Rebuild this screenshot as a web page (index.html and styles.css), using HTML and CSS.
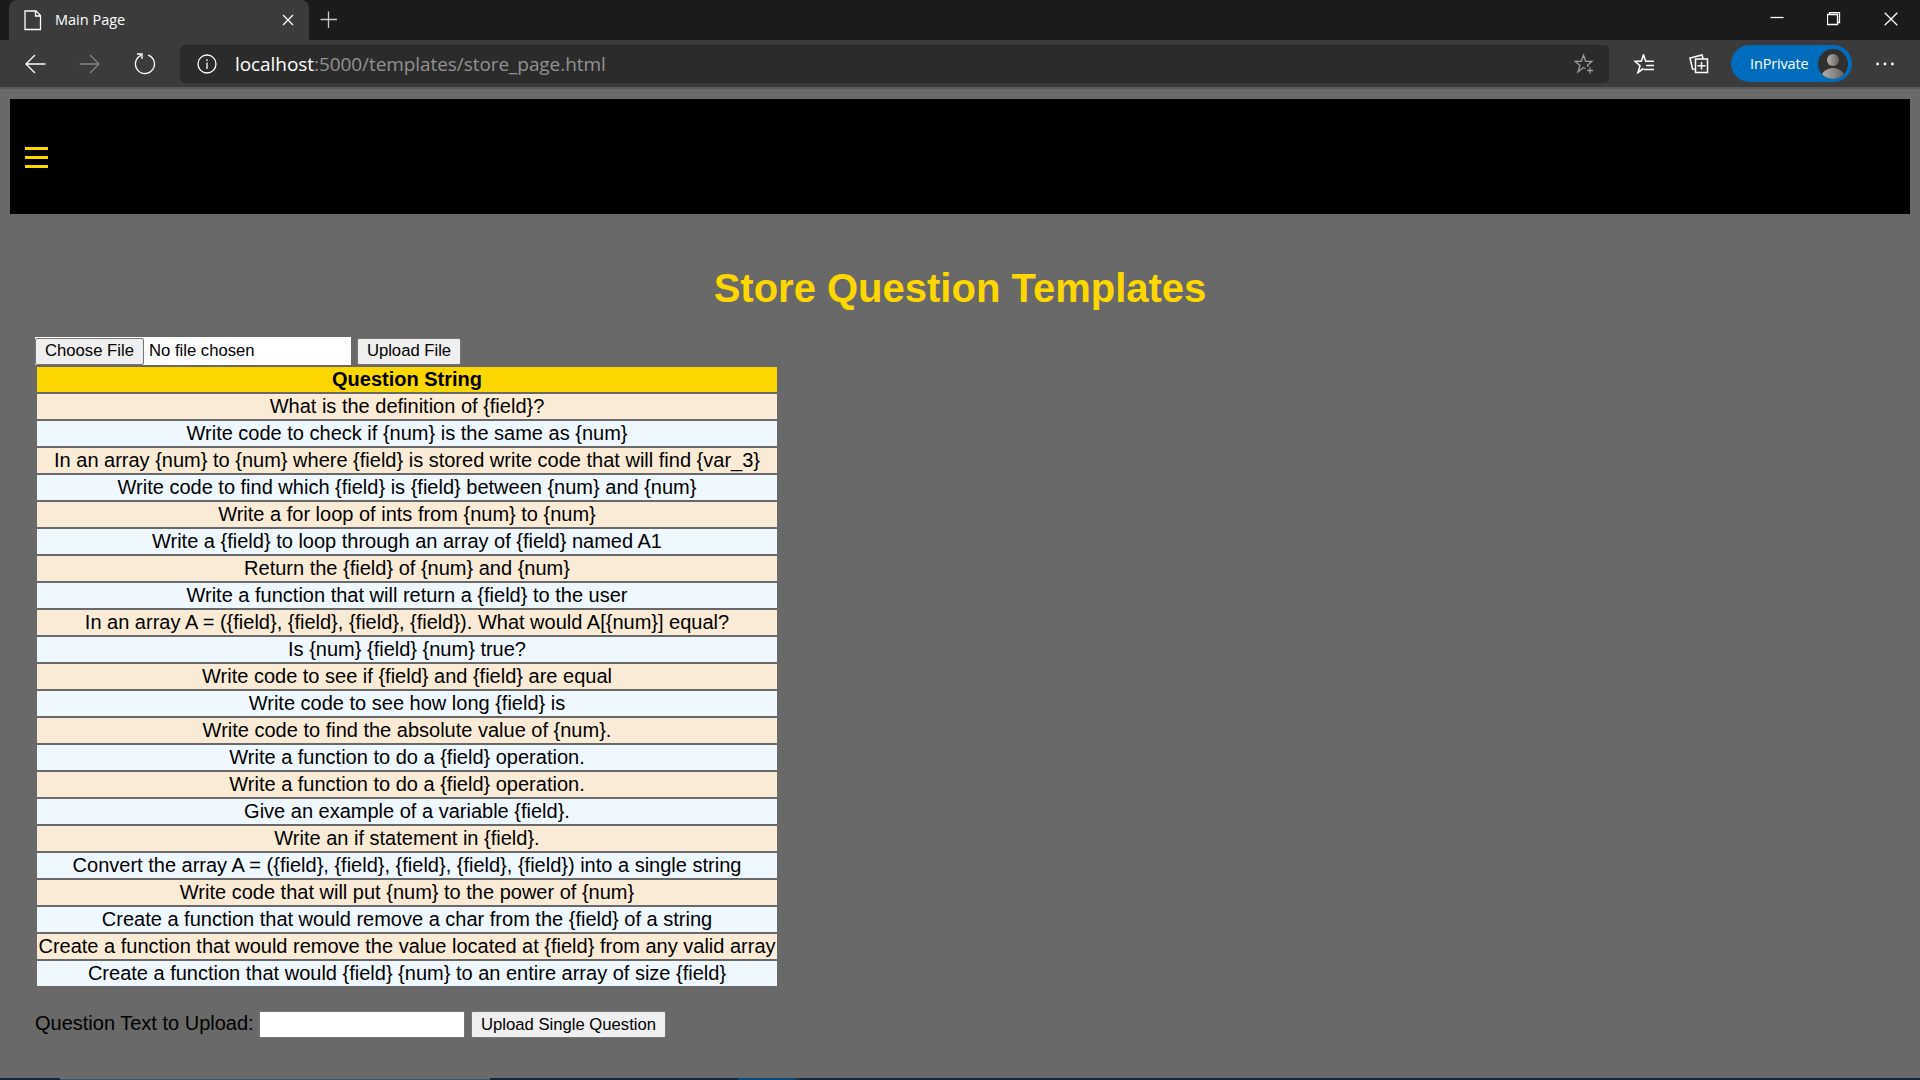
FILE: index.html
```html
<!DOCTYPE html>
<html lang="en">
<head>
<meta charset="utf-8">
<title>Main Page</title>
<link rel="stylesheet" href="styles.css">
</head>
<body>
<div class="tabs">
  <div class="tab">
    <svg class="doc" width="18" height="21" viewBox="0 0 18 21"><path d="M1 1H12L16.5 5.5V19.5H1ZM11.5 1V6H16.5"/></svg>
    <span class="tab-title">Main Page</span>
    <svg class="tab-close" width="12" height="12" viewBox="0 0 12 12"><path d="M1 1L11 11M11 1L1 11"/></svg>
  </div>
  <svg class="plus" width="18" height="18" viewBox="0 0 18 18"><path d="M8.5 0.500V17M0.500 8.500H17"/></svg>
  <div class="window-buttons">
    <svg width="14" height="14" viewBox="0 0 14 14"><path d="M0.500 5.500H13.500"/></svg>
    <svg width="14" height="14" viewBox="0 0 14 14"><path d="M0.500 2.500H10.500V12.500H0.500ZM2.500 2.500V0.500H12.500V10.500H10.500"/></svg>
    <svg width="14" height="14" viewBox="0 0 14 14"><path d="M0.700 0.700L13.300 13.300M13.300 0.700L0.700 13.300"/></svg>
  </div>
</div>
<div class="toolbar">
  <svg class="back" width="21" height="20" viewBox="0 0 21 20"><path d="M10 1L1 10L10 19M1 10H20.500"/></svg>
  <svg class="forward" width="21" height="20" viewBox="0 0 21 20"><path d="M11 1L20 10L11 19M20 10H0.500"/></svg>
  <svg class="reload" width="22" height="23" viewBox="0 0 22 23"><path d="M14.200 3.100A9.500 9.500 0 1 1 7 3.400M3 2H8V7"/></svg>
  <div class="address">
    <svg class="info" width="20" height="20" viewBox="0 0 20 20"><circle cx="10" cy="10" r="9"/><path d="M10 8.500V15M10 5.200V7"/></svg>
    <span class="url"><b>localhost</b>:5000/templates/store_page.html</span>
    <svg class="star" width="21" height="20" viewBox="0 0 21 20"><path d="M11.500 14.700L9.500 13.500L4 18L6 11.500L1 7.300H7.300L9.500 1L11.700 7.300H18L13.500 11.300L14 13M16 13.500V19.500M13 16.500H19"/></svg>
  </div>
  <svg class="favorites" width="21" height="20" viewBox="0 0 21 20"><path d="M9.500 14.500L4 18.500L6 11.700L1 7.300H7.300L9.500 1L11.700 7.300H20M12 11.500H20M10 15.500H20"/></svg>
  <svg class="collections" width="20" height="20" viewBox="0 0 20 20"><path d="M6.500 5H18.500V18.500H6.500ZM12.500 8V15.500M8.500 11.700H16.500M5.500 15.500L3.500 15L1 4L13 1L14 4.500"/></svg>
  <div class="profile">
    <span>InPrivate</span>
    <svg width="30" height="30" viewBox="0 0 30 30">
      <defs><linearGradient id="shade"><stop offset="0" stop-color="#b5b3b0"/><stop offset="1" stop-color="#65615e"/></linearGradient><clipPath id="disc"><circle cx="15" cy="15" r="15"/></clipPath></defs>
      <circle class="disc" cx="15" cy="15" r="15"/>
      <g clip-path="url(#disc)"><circle class="person" cx="15" cy="11" r="6"/><ellipse class="person" cx="15" cy="28" rx="11.500" ry="9"/></g>
    </svg>
  </div>
  <svg class="more" width="18" height="4" viewBox="0 0 18 4"><circle cx="1.600" cy="2" r="1.400"/><circle cx="9" cy="2" r="1.400"/><circle cx="16.400" cy="2" r="1.400"/></svg>
</div>
<main class="page">
  <header class="banner">
    <svg class="menu" width="23" height="21" viewBox="0 0 23 21"><path d="M0 1.500H23M0 10.500H23M0 19.500H23"/></svg>
  </header>
  <h1>Store Question Templates</h1>
  <section class="content">
    <div class="upload">
      <div class="file"><button class="button choose">Choose File</button><span>No file chosen</span></div>
      <button class="button upload-file">Upload File</button>
    </div>
    <table>
      <tr><th>Question String</th></tr>
      <tr><td>What is the definition of {field}?</td></tr>
      <tr><td>Write code to check if {num} is the same as {num}</td></tr>
      <tr><td>In an array {num} to {num} where {field} is stored write code that will find {var_3}</td></tr>
      <tr><td>Write code to find which {field} is {field} between {num} and {num}</td></tr>
      <tr><td>Write a for loop of ints from {num} to {num}</td></tr>
      <tr><td>Write a {field} to loop through an array of {field} named A1</td></tr>
      <tr><td>Return the {field} of {num} and {num}</td></tr>
      <tr><td>Write a function that will return a {field} to the user</td></tr>
      <tr><td>In an array A = ({field}, {field}, {field}, {field}). What would A[{num}] equal?</td></tr>
      <tr><td>Is {num} {field} {num} true?</td></tr>
      <tr><td>Write code to see if {field} and {field} are equal</td></tr>
      <tr><td>Write code to see how long {field} is</td></tr>
      <tr><td>Write code to find the absolute value of {num}.</td></tr>
      <tr><td>Write a function to do a {field} operation.</td></tr>
      <tr><td>Write a function to do a {field} operation.</td></tr>
      <tr><td>Give an example of a variable {field}.</td></tr>
      <tr><td>Write an if statement in {field}.</td></tr>
      <tr><td>Convert the array A = ({field}, {field}, {field}, {field}, {field}) into a single string</td></tr>
      <tr><td>Write code that will put {num} to the power of {num}</td></tr>
      <tr><td>Create a function that would remove a char from the {field} of a string</td></tr>
      <tr><td>Create a function that would remove the value located at {field} from any valid array</td></tr>
      <tr><td>Create a function that would {field} {num} to an entire array of size {field}</td></tr>
    </table>
    <div class="single">
      <label for="question">Question Text to Upload:</label>
      <input id="question" type="text">
      <button class="button upload-single">Upload Single Question</button>
    </div>
  </section>
</main>
<div class="taskbar"><i class="window"></i><i class="active"></i></div>
</body>
</html>
```
FILE: styles.css
```css
* { box-sizing: border-box; }
body {
  margin: 0;
  width: 1920px;
  height: 1080px;
  overflow: hidden;
  display: flex;
  flex-direction: column;
  background: #696969;
  font-family: "Liberation Sans", Arial, sans-serif;
  font-size: 20px;
  color: #000;
}
svg { display: block; flex: none; fill: none; stroke: #fff; stroke-width: 1.3; }
.tabs, .toolbar { display: flex; flex: none; font-family: "Open Sans", sans-serif; }
.tabs { height: 40px; background: #1b1b1b; padding-left: 9px; }
.tab { display: flex; align-items: center; width: 300px; background: #3b3b3b; border-radius: 8px 8px 0 0; padding: 0 15px; }
.tab-title { margin-left: 13px; flex: 1; font-size: 14.5px; line-height: 20px; color: #fff; }
.plus { margin: 11px 0 0 11px; stroke: #c8c8c8; }
.window-buttons { display: flex; gap: 43px; margin: 12px 22px 0 auto; }
.toolbar { height: 49px; background: #3b3b3b; border-bottom: 2px solid #5a5a5a; align-items: center; }
.back { margin-left: 25px; }
.forward { margin-left: 33px; stroke: #858585; }
.reload { margin-left: 34px; }
.address { display: flex; align-items: center; width: 1429px; height: 38px; margin-left: 24px; padding: 0 14px 0 17px; background: #2b2b2b; border-radius: 5px; }
.url { margin-left: 18px; flex: 1; font-size: 19px; letter-spacing: -0.07px; line-height: 28px; color: #929292; white-space: nowrap; }
.url b { font-weight: 400; color: #fff; }
.star { stroke: #9b9b9b; }
.favorites { margin-left: 25px; stroke-width: 1.6; }
.collections { margin-left: 34px; stroke-width: 1.5; }
.profile { display: flex; align-items: center; justify-content: space-between; width: 121px; height: 37px; margin-left: 22px; padding: 0 4px 0 19px; border-radius: 19px; background: #006cbe; color: #fff; font-size: 14.5px; letter-spacing: -0.15px; }
.profile svg { stroke: none; }
.disc { fill: #32302e; }
.person { fill: url(#shade); }
.more { margin-left: 24px; fill: #fff; stroke: none; }
.page { flex: 1; padding: 10px; min-height: 0; }
.banner { display: flex; align-items: center; height: 115px; background: #000; padding-left: 15px; }
.menu { stroke: #ffd700; stroke-width: 3; margin-top: 2px; }
h1 { margin: 51px 0 0; height: 46px; line-height: 46px; font-size: 40px; text-align: center; color: #ffd700; }
.content { padding: 26px 25px 0; }
.upload { display: flex; align-items: center; gap: 6px; height: 28px; }
.file { display: flex; align-items: center; width: 316px; height: 28px; background: #fff; font-size: 16.667px; }
.file span { margin-left: 5px; line-height: 24px; }
.button { height: 27px; padding: 0; border: 1px solid #767676; border-radius: 2px; background: #efefef; color: #000; font: 16.667px/24px "Liberation Sans", Arial, sans-serif; }
.choose { width: 109px; }
.upload-file { width: 104px; }
table { border-spacing: 2px; width: 744px; table-layout: fixed; }
th, td { height: 25px; padding: 0; line-height: 25px; text-align: center; white-space: nowrap; background: #faebd7; }
tr:nth-child(odd) td { background: #f0f8ff; }
tr th { background: #ffd700; }
.single { display: flex; align-items: center; margin-top: 23px; height: 27px; }
label { line-height: 24px; margin-top: -3px; width: 224px; white-space: nowrap; }
input { width: 206px; height: 27px; border: 1px solid #767676; background: #fff; padding: 1px 3px; }
.upload-single { margin-left: 6px; width: 195px; }
.taskbar { display: flex; flex: none; height: 2px; background: #12283a; padding-left: 60px; }
.window { width: 430px; background: linear-gradient(#5f7485 50%, #3d5263 50%); }
.active { width: 61px; margin-left: 248px; background: #0d4a7c; border-right: 5px solid #173750; }
```
